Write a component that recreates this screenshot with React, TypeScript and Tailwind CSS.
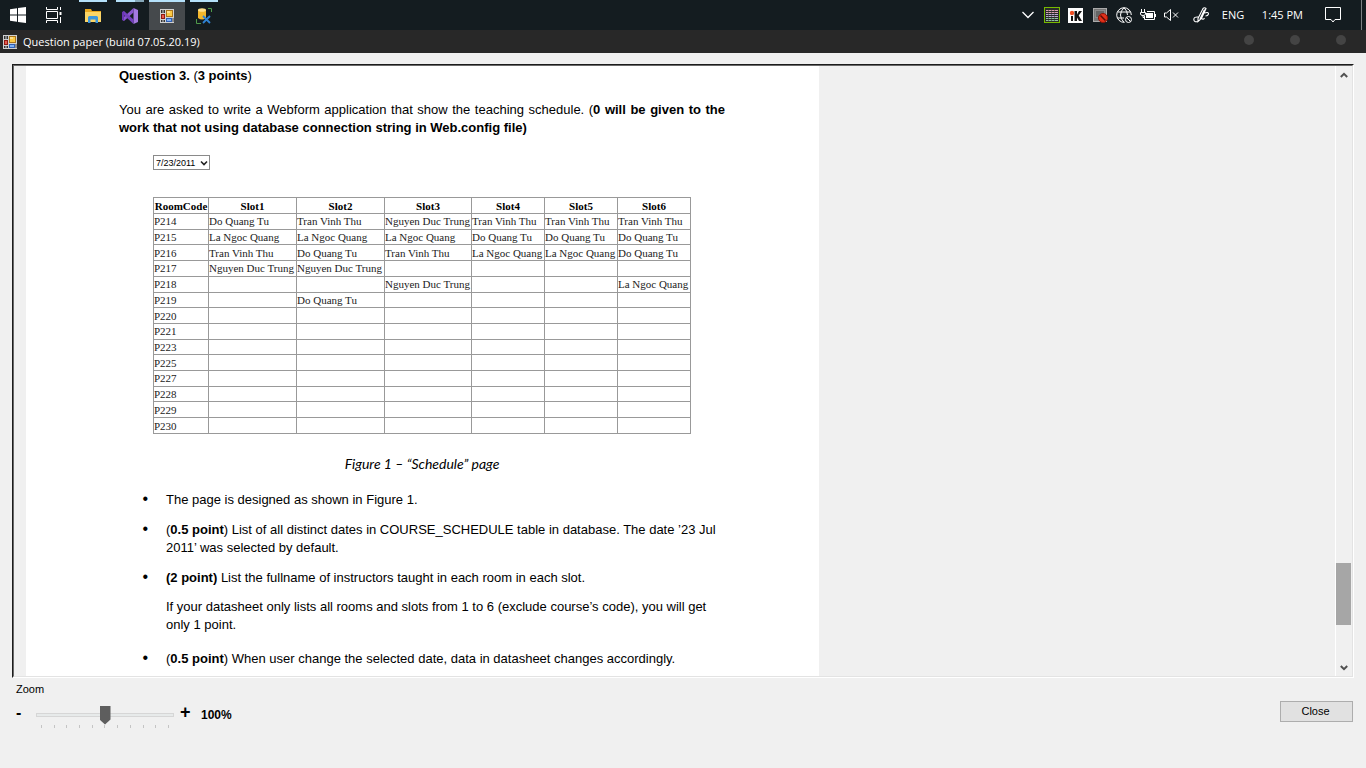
import type { ReactNode } from "react";

const PEOPLE = {
  D: "Do Quang Tu",
  T: "Tran Vinh Thu",
  L: "La Ngoc Quang",
  N: "Nguyen Duc Trung",
} as const;

type Person = keyof typeof PEOPLE;

const SCHEDULE: { room: string; slots: (Person | "")[] }[] = [
  { room: "P214", slots: ["D", "T", "N", "T", "T", "T"] },
  { room: "P215", slots: ["L", "L", "L", "D", "D", "D"] },
  { room: "P216", slots: ["T", "D", "T", "L", "L", "D"] },
  { room: "P217", slots: ["N", "N", "", "", "", ""] },
  { room: "P218", slots: ["", "", "N", "", "", "L"] },
  { room: "P219", slots: ["", "D", "", "", "", ""] },
  ...["P220", "P221", "P223", "P225", "P227", "P228", "P229", "P230"].map((room) => ({
    room,
    slots: ["", "", "", "", "", ""] as "" [],
  })),
];

const FORM_ICON = (
  <svg viewBox="0 0 14 14" className="size-3.5" aria-hidden="true">
    <rect width="14" height="14" fill="#d0d0d0" />
    <rect x="1" y="1" width="1.500" height="3" fill="#333" />
    <rect x="3.500" y="1" width="1.500" height="3" fill="#333" />
    <rect x="6" y="1" width="7" height="7" fill="#a8741a" />
    <rect x="7" y="2" width="5" height="5" fill="#fbc944" />
    <rect x="7" y="2" width="3" height="2" fill="#fde08c" />
    <rect x="1" y="5" width="4" height="5" fill="#8f1a12" />
    <rect x="2" y="6" width="2" height="3" fill="#e85a4e" />
    <rect x="6" y="9" width="6" height="4" fill="#2f5fb3" />
    <rect x="7" y="10" width="4" height="2" fill="#7fb0f5" />
    <rect x="1" y="11" width="1.500" height="2" fill="#333" />
    <rect x="3.500" y="11" width="1.500" height="2" fill="#333" />
    <rect x="12.500" y="9" width="1" height="4" fill="#444" />
  </svg>
);

function TaskButton({ label, className, children }: { label: string; className: string; children: ReactNode }) {
  return (
    <button type="button" aria-label={label} className={`flex h-full items-center justify-center ${className}`}>
      {children}
    </button>
  );
}

function Taskbar() {
  return (
    <header className="flex h-[30px] items-stretch justify-between bg-[#141c20] text-white">
      <nav className="flex">
        <TaskButton label="Start" className="w-9">
          <svg viewBox="0 0 16 16" className="size-4" fill="#fff">
            <path d="M0 2.2 7 1.2V7.5H0zM8 1.1 16 0V7.5H8zM0 8.5H7V14.8L0 13.8zM8 8.5H16V16L8 14.9z" />
          </svg>
        </TaskButton>
        <TaskButton label="Task view" className="w-9">
          <svg viewBox="0 0 16 16" className="size-4" fill="none" stroke="#fff">
            <path d="M.5 0V2.5H11.5V0M.5 16V13.5H11.5V16M.5 4.5H11.5V11.5H.5zM14.5 0V3M14.5 10V16" />
            <path d="M13.5 5h2v3h-2z" fill="#fff" stroke="none" />
          </svg>
        </TaskButton>
        <TaskButton label="File Explorer" className="ml-[7px] w-7 border-t-2 border-[#b5e1fa]">
          <svg viewBox="0 0 16 14" className="h-3.5 w-4">
            <path d="M0 0H6L7 2H16V13H0z" fill="#e9a820" />
            <path d="M0 3H16V13H0z" fill="#fbd667" />
            <path d="M3 14V8.500Q3 7 4.500 7H11.500Q13 7 13 8.500V14H10.500V10.500H5.500V14z" fill="#3a96dd" />
          </svg>
        </TaskButton>
        <TaskButton label="Visual Studio" className="ml-[9px] w-7 flex-col">
          <span className="flex h-0.5 w-full shrink-0">
            <span className="flex-1 bg-[#b5e1fa]" />
            <span className="w-[9px] bg-[#86a7b8]" />
          </span>
          <span className="flex flex-1 items-center">
            <svg viewBox="0 0 16 16" className="size-4">
              <path d="M11.500 0 16 2V14L11.500 16z" fill="#a479e0" />
              <path d="M11.500 0V4.500L2 13 0 11.800V10.800L11.500 0z" fill="#8a56cf" />
              <path d="M11.500 16V11.500L2 3 0 4.200V5.200L11.500 16z" fill="#7440bd" />
              <path d="M0 4.200 2 3V13L0 11.800z" fill="#6a36b4" />
            </svg>
          </span>
        </TaskButton>
        <TaskButton label="Question paper" className="ml-[5px] w-9 border-t-2 border-[#b5e1fa] bg-[#45494c]">
          {FORM_ICON}
        </TaskButton>
        <TaskButton label="Database tools" className="ml-[5px] w-7 border-t-2 border-[#b5e1fa]">
          <svg viewBox="0 0 16 16" className="size-4" fill="none">
            <path d="M2 2V10Q6 13 10 10V2z" fill="#f3b72c" />
            <ellipse cx="6" cy="2" rx="4" ry="1.800" fill="#ffe08a" />
            <path d="M12 .5H15.500V4M.5 11V15.500H5" stroke="#4f9a4a" />
            <path d="M7 8 14 15M14 8 7 15" stroke="#2f84d6" strokeWidth="1.800" />
          </svg>
        </TaskButton>
      </nav>
      <div className="flex items-center">
        <svg viewBox="0 0 12 8" className="mr-2.5 h-2 w-3" fill="none" stroke="#fff" strokeWidth="1.300">
          <path d="M.5 1 6 6.500 11.500 1" />
        </svg>
        <svg viewBox="0 0 16 16" className="mr-2 size-4">
          <rect x=".5" y=".5" width="15" height="15" fill="#2a2a2a" stroke="#76b900" />
          <path d="M2 3.500H14M2 5.500H14" stroke="#dba0b4" />
          <path d="M2 7.500H14M2 9.500H14" stroke="#b9a8cf" />
          <path d="M2 11.500H14M2 13.500H14" stroke="#8fc0a0" />
          <path d="M4.500 2V14M7.500 2V14M10.500 2V14" stroke="#2a2a2a" strokeWidth=".5" />
        </svg>
        <svg viewBox="0 0 15 15" className="mr-2.5 size-[15px]">
          <rect width="15" height="15" fill="#fff" />
          <path d="M3 8H5V13H3zM6.500 3H9V6.500L11 3H14L10.700 7.600 14 13H11L9 9.500V13H6.500z" fill="#151515" />
          <circle cx="4" cy="5" r="2.200" fill="#f04e23" />
        </svg>
        <svg viewBox="0 0 15 15" className="mr-2 size-[15px]">
          <rect x=".5" y=".5" width="13" height="13" fill="#777" stroke="#aaa" />
          <rect x="2.500" y="2.500" width="9" height="7" fill="#666" stroke="#8a8a8a" />
          <circle cx="10" cy="10" r="4.500" fill="#e0301a" stroke="#8d1408" />
          <path d="M7.500 7.500 12.500 12.500" stroke="#5a0c05" strokeWidth="1.500" />
        </svg>
        <svg viewBox="0 0 16 16" className="mr-2 size-4" fill="none" stroke="#fff">
          <path d="M8.500 15.300A7.300 7.300 0 1 1 15.300 8M8 .7Q4.500 4 4.500 8T8 15.300M8 .7Q11.500 4 11.500 8M1.500 5H14.500M1.500 11H8" />
          <circle cx="12.500" cy="12.500" r="3" />
          <path d="M10.500 10.500 14.500 14.500" />
        </svg>
        <svg viewBox="0 0 16 12" className="mr-2 h-3 w-4" fill="none" stroke="#fff">
          <path d="M1.500 0V3M4.500 0V3M.5 3.500H5.500V5Q5.500 6.500 3 6.500.5 6.500.5 5zM3 6.500V8.500H4M4.500 7V10.500H14.500V2.500H7" />
          <path d="M6 4H13V9H6zM15 5h1v3h-1z" fill="#fff" stroke="none" />
        </svg>
        <svg viewBox="0 0 15 12" className="mr-3.5 h-3 w-[15px]" fill="none" stroke="#fff">
          <path d="M.5 4V8H2.500L6.500 11.500V.5L2.500 4zM9 3.500 14 8.500M14 3.500 9 8.500" />
        </svg>
        <svg viewBox="0 0 16 16" className="mr-[13px] size-4" fill="none" stroke="#fff" strokeWidth="1.100">
          <path d="M5 11.500 10 1.500Q11.500 0 13 1.500L8.500 11.500 5 14.500zM7 12 11.500 2.500M5.500 10Q.8 9.500 .8 12.500 1 15.500 5 14.500M8.500 11Q10 13.500 11.500 11M11.500 6Q15.500 4.500 15.500 7 15 9 12.500 9" />
        </svg>
        <span className="mr-4 w-6 font-['Open_Sans',sans-serif] text-[11px]">ENG</span>
        <span className="mr-[22px] font-['Open_Sans',sans-serif] text-[11px]">1:45 PM</span>
        <svg viewBox="0 0 16 16" className="mr-5 size-4" fill="none" stroke="#fff">
          <path d="M.5 .5H15.500V12.500H10L8 15 6 12.500H.5z" />
        </svg>
        <span className="mr-1 h-full w-px bg-[#7b8083]" />
      </div>
    </header>
  );
}

function TitleBar() {
  return (
    <div className="flex h-[23px] items-center bg-[#282828] pl-[3px] text-white">
      {FORM_ICON}
      <h1 className="ml-1.5 pt-px font-['Open_Sans',sans-serif] text-[11px]">Question paper (build 07.05.20.19)</h1>
      <div className="mr-5 ml-auto flex gap-9 pb-1">
        <button type="button" aria-label="Minimize" className="size-2.5 rounded-full bg-[#444]" />
        <button type="button" aria-label="Maximize" className="size-2.5 rounded-full bg-[#444]" />
        <button type="button" aria-label="Close window" className="size-2.5 rounded-full bg-[#444]" />
      </div>
    </div>
  );
}

function ScheduleTable() {
  return (
    <table className="ml-[34px] h-[237px] w-[538px] table-fixed border-collapse font-['Liberation_Serif',serif] text-[11px] leading-3 whitespace-nowrap text-[#222]">
      <colgroup>
        <col className="w-[55px]" />
        <col className="w-[88px]" />
        <col className="w-[88px]" />
        <col className="w-[87px]" />
        <col className="w-[73px]" />
        <col className="w-[73px]" />
        <col className="w-[73px]" />
      </colgroup>
      <thead>
        <tr className="h-4">
          {["RoomCode", "Slot1", "Slot2", "Slot3", "Slot4", "Slot5", "Slot6"].map((h) => (
            <th key={h} className="border border-[#999] p-0 text-center font-bold text-black">
              {h}
            </th>
          ))}
        </tr>
      </thead>
      <tbody>
        {SCHEDULE.map(({ room, slots }) => (
          <tr key={room}>
            <td className="border border-[#999] p-0">{room}</td>
            {slots.map((p, i) => (
              <td key={i} className="border border-[#999] p-0">
                {p && PEOPLE[p]}
              </td>
            ))}
          </tr>
        ))}
      </tbody>
    </table>
  );
}

function Paper() {
  return (
    <article className="ml-3 w-[793px] shrink-0 overflow-hidden bg-white pr-[94px] pl-[93px] font-['Liberation_Sans',Arial,sans-serif] text-[13px] leading-[18px] text-black">
      <h2 className="mt-px font-bold">
        Question 3. <span className="font-normal">(</span>3 points<span className="font-normal">)</span>
      </h2>
      <p className="mt-4 text-justify">
        You are asked to write a Webform application that show the teaching schedule. (
        <b>0 will be given to the work that not using database connection string in Web.config file)</b>
      </p>
      <div className="mt-[18px] ml-[34px] grid h-[15px] w-[57px] items-center">
        <select
          aria-label="Schedule date"
          className="col-start-1 row-start-1 h-full appearance-none border border-[#8a8a8a] bg-white pl-0.5 text-[9px] leading-3"
        >
          <option>7/23/2011</option>
        </select>
        <svg viewBox="0 0 8 6" className="pointer-events-none col-start-1 row-start-1 mr-0.5 h-1.5 w-2 justify-self-end" fill="none" stroke="#222" strokeWidth="1.600">
          <path d="M1 1.500 4 4.500 7 1.500" />
        </svg>
      </div>
      <figure className="mt-[27px]">
        <ScheduleTable />
        <figcaption className="mt-[21px] text-center font-[Lato,sans-serif] text-[14px] italic">
          Figure 1 – “Schedule” page
        </figcaption>
      </figure>
      <ul className="mt-[17px] list-['•____'] space-y-[11px] pl-[47px] marker:text-[16px]">
        <li>The page is designed as shown in Figure 1.</li>
        <li>
          (<b>0.5 point</b>) List of all distinct dates in COURSE_SCHEDULE table in database. The date ’23 Jul 2011’ was
          selected by default.
        </li>
        <li>
          <b>(2 point)</b> List the fullname of instructors taught in each room in each slot.
          <p className="mt-[11px]">
            If your datasheet only lists all rooms and slots from 1 to 6 (exclude course’s code), you will get only 1
            point.
          </p>
        </li>
        <li className="pt-1">
          (<b>0.5 point</b>) When user change the selected date, data in datasheet changes accordingly.
        </li>
      </ul>
    </article>
  );
}

function Chevron({ down = false }: { down?: boolean }) {
  return (
    <svg viewBox="0 0 8 6" className={down ? "h-1.5 w-2 rotate-180" : "h-1.5 w-2"} fill="none" stroke="#505050" strokeWidth="2">
      <path d="M.8 5 4 1.800 7.200 5" />
    </svg>
  );
}

function Scrollbar() {
  return (
    <div className="flex w-[17px] flex-col border-l border-white bg-[#f0f0f0] pr-px">
      <button type="button" aria-label="Scroll up" className="flex h-[17px] w-full items-center justify-center">
        <Chevron />
      </button>
      <div className="grow-[480]" />
      <div className="h-[62px] bg-[#a6a6a6]" />
      <div className="grow-[34]" />
      <button type="button" aria-label="Scroll down" className="flex h-[17px] w-full items-center justify-center">
        <Chevron down />
      </button>
    </div>
  );
}

function Footer() {
  return (
    <footer className="flex h-[90px] items-start justify-between pr-[13px] pl-4 font-['Liberation_Sans',Arial,sans-serif] text-[11px] text-black">
      <div>
        <label htmlFor="zoom" className="block pt-[3px] leading-4">
          Zoom
        </label>
        <div className="mt-2 flex items-start">
          <button type="button" aria-label="Zoom out" className="w-5 text-left text-base leading-4 font-bold">
            -
          </button>
          <div className="w-[138px]">
            <input
              id="zoom"
              type="range"
              min="0"
              max="200"
              defaultValue="100"
              className="block h-[19px] w-full appearance-none bg-transparent [&::-webkit-slider-runnable-track]:h-1 [&::-webkit-slider-runnable-track]:border [&::-webkit-slider-runnable-track]:border-[#d6d6d6] [&::-webkit-slider-runnable-track]:bg-[#e7eaea] [&::-webkit-slider-thumb]:-mt-2 [&::-webkit-slider-thumb]:h-[19px] [&::-webkit-slider-thumb]:w-[11px] [&::-webkit-slider-thumb]:appearance-none [&::-webkit-slider-thumb]:bg-[#5e5e5e] [&::-webkit-slider-thumb]:[clip-path:polygon(0_0,100%_0,100%_74%,50%_100%,0_74%)]"
            />
            <div className="mt-px flex justify-between px-[5px]" aria-hidden="true">
              {Array.from({ length: 11 }, (_, i) => (
                <span key={i} className="h-[3px] w-px bg-[#c4c4c4]" />
              ))}
            </div>
          </div>
          <button type="button" aria-label="Zoom in" className="ml-1.5 w-[21px] text-left text-lg leading-[14px] font-bold">
            +
          </button>
          <output htmlFor="zoom" className="pt-px text-[12px] leading-[18px] font-bold">
            100%
          </output>
        </div>
      </div>
      <button type="button" className="mt-[23px] h-[21px] w-[73px] border border-[#adadad] bg-[#e1e1e1] pr-0.5 text-[11px]">
        Close
      </button>
    </footer>
  );
}

export default function App() {
  return (
    <div className="flex h-screen flex-col bg-[#f0f0f0]">
      <Taskbar />
      <TitleBar />
      <main className="mx-3 mt-[11px] flex min-h-0 flex-1 border border-t-[#1c1c1c] border-r-white border-b-white border-l-[#1c1c1c]">
        <div className="flex min-w-0 flex-1 border border-t-[#696969] border-r-[#e3e3e3] border-b-[#e3e3e3] border-l-[#696969]">
          <div className="flex min-w-0 flex-1 overflow-hidden">
            <Paper />
          </div>
          <Scrollbar />
        </div>
      </main>
      <Footer />
    </div>
  );
}
